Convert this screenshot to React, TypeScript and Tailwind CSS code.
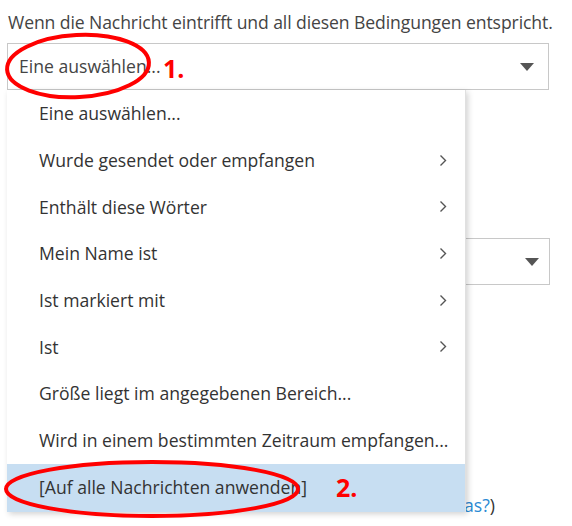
import React from "react";

const items = [
  ["Eine auswählen...", false],
  ["Wurde gesendet oder empfangen", true],
  ["Enthält diese Wörter", true],
  ["Mein Name ist", true],
  ["Ist markiert mit", true],
  ["Ist", true],
  ["Größe liegt im angegebenen Bereich...", false],
  ["Wird in einem bestimmten Zeitraum empfangen...", false],
] as const;

const Chevron = () => (
  <svg width="8" height="13" viewBox="0 0 8 13" className="mr-[18px]">
    <path d="M1.5 1.5 L6.5 6.5 L1.5 11.5" fill="none" stroke="#555" strokeWidth="1.4" />
  </svg>
);

const Arrow = () => (
  <svg width="14" height="8" viewBox="0 0 14 8">
    <path d="M0 0 H14 L7 8 Z" fill="#555" />
  </svg>
);

export default function App() {
  return (
    <div className="relative w-[572px] h-[526px] bg-white overflow-hidden text-[#333]" style={{ fontFamily: '"Open Sans", "Noto Sans", sans-serif' }}>
      <div className="pt-[10px] pl-[8px] text-[17.6px] text-[#444] leading-[24px] whitespace-nowrap tracking-[-0.1px]">Wenn die Nachricht eintrifft und all diesen Bedingungen entspricht.</div>
      <div className="ml-[7px] mt-[9px] w-[542px] h-[47px] border border-[#c8c8c8] flex items-center justify-between pl-[11px] pr-[14px] text-[17.6px] text-[#444]">
        <span>Eine auswählen...</span>
        <Arrow />
      </div>
      <div className="absolute left-[440px] top-[238px] w-[110px] h-[47px] border border-[#c8c8c8] flex items-center justify-end pr-[10px]">
        <Arrow />
      </div>
      <div className="absolute left-[464px] top-[492px] text-[17.6px] text-[#333]"><span className="text-[#2a8ad4]">as?</span>)</div>
      <div className="absolute left-[7px] top-[90px] w-[459px] bg-white shadow-[2px_2px_6px_rgba(0,0,0,0.18)] border-r border-[#e0e0e0]">
        {items.map(([t, c]) => (
          <div key={t} className="h-[46.7px] flex items-center justify-between pl-[32px] text-[17.6px] text-[#333] whitespace-nowrap">
            <span>{t}</span>
            {c && <Chevron />}
          </div>
        ))}
        <div className="h-[48px] bg-[#c7def2] flex items-center pl-[32px] text-[17.6px] text-[#333]">[Auf alle Nachrichten anwenden]</div>
      </div>
      <svg className="absolute left-0 top-0 pointer-events-none" width="572" height="526">
        <ellipse cx="78" cy="66" rx="71" ry="31" fill="none" stroke="#f00" strokeWidth="4" transform="rotate(-3 78 66)" />
        <ellipse cx="152" cy="489" rx="146" ry="27" fill="none" stroke="#f00" strokeWidth="4" />
      </svg>
      <div className="absolute left-[163px] top-[50px] text-[25px] font-bold text-[#f00]">1.</div>
      <div className="absolute left-[336px] top-[469px] text-[25px] font-bold text-[#f00]">2.</div>
    </div>
  );
}
